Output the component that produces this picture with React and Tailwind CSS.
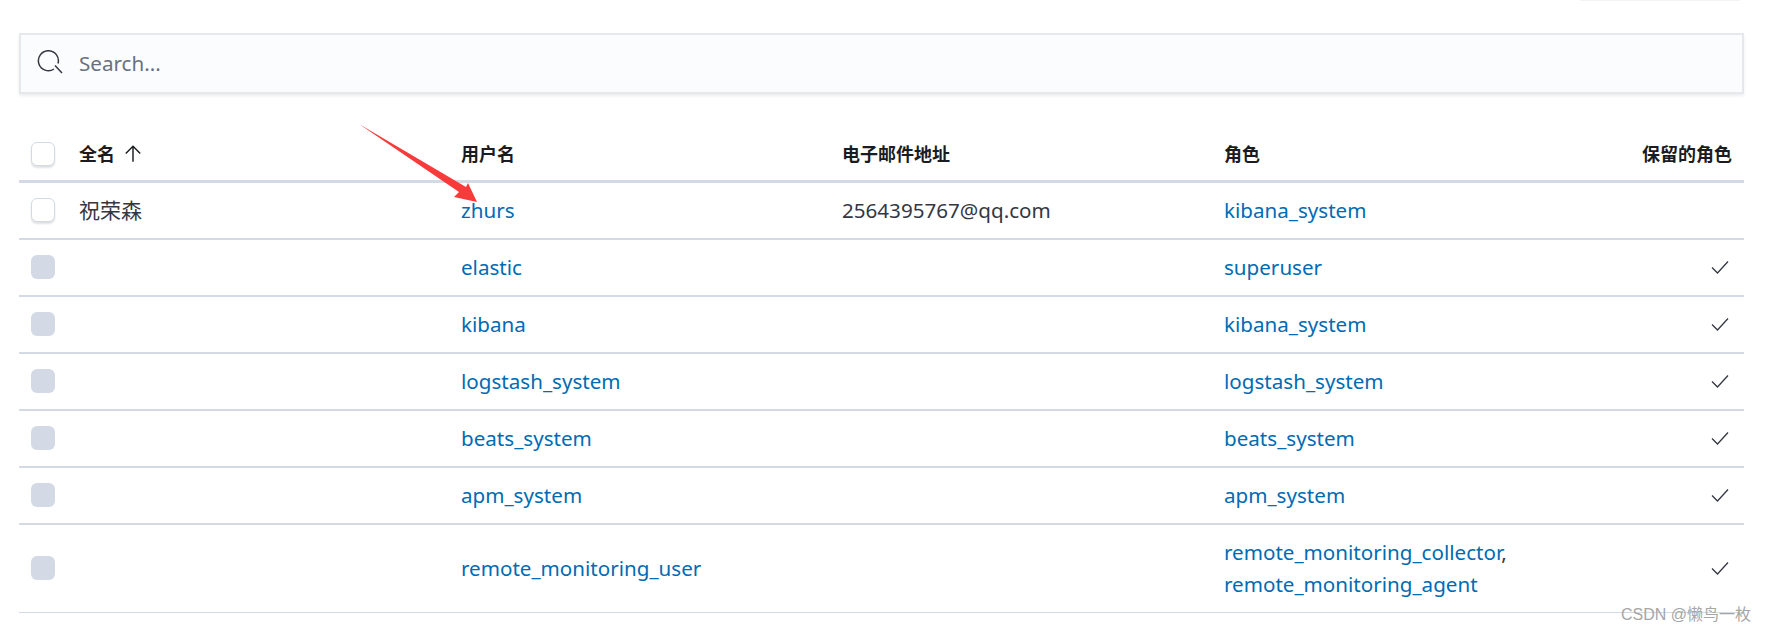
import React from "react";

const rows = [
  { name: "祝荣森", user: "zhurs", email: "2564395767@qq.com", roles: ["kibana_system"], reserved: false },
  { user: "elastic", roles: ["superuser"], reserved: true },
  { user: "kibana", roles: ["kibana_system"], reserved: true },
  { user: "logstash_system", roles: ["logstash_system"], reserved: true },
  { user: "beats_system", roles: ["beats_system"], reserved: true },
  { user: "apm_system", roles: ["apm_system"], reserved: true },
  { user: "remote_monitoring_user", roles: ["remote_monitoring_collector", "remote_monitoring_agent"], reserved: true },
];

const Check = () => (
  <svg width="20" height="20" viewBox="0 0 20 20" fill="none" stroke="#343741" strokeWidth="1.3">
    <path d="M2 10.5 L7.5 16 L18 4.5" />
  </svg>
);

const Box = ({ disabled }) =>
  disabled ? (
    <div className="w-6 h-6 rounded-md bg-[#d3dae6]" />
  ) : (
    <div className="w-6 h-6 rounded-md bg-white border border-[#d3dae6] shadow-[0_2px_2px_rgba(0,0,0,0.12)]" />
  );

export default function App() {
  return (
    <div className="relative w-[1774px] h-[632px] bg-white overflow-hidden pt-[33px] px-[19px] text-[#343741] font-['Noto_Sans','Noto_Sans_CJK_SC',sans-serif]">
      <div className="absolute top-0 right-[34px] w-[160px] h-px bg-[#f3f4f6]" />
      <div className="w-[1725px] h-[61px] flex items-center pl-[16px] bg-[#fbfcfd] border-2 border-[#e6e8ec] shadow-[0_2px_3px_rgba(0,0,0,0.07)]">
        <svg width="28" height="28" viewBox="0 0 28 28" fill="none" stroke="#343741" strokeWidth="1.5" className="shrink-0">
          <path d="M17 19 A10 10 0 1 1 21 13.5" />
          <path d="M18 15.5 L25 23" />
        </svg>
        <span className="ml-[14px] text-[20.6px] text-[#69707d]">Search...</span>
      </div>

      <div className="mt-[29px] w-[1725px]">
        <div className="grid grid-cols-[60px_382px_381px_382px_1fr] h-[60px] pt-[5px] items-center border-b-[3px] border-[#d3dae6] font-bold text-[18px] text-[#1a1c21]">
          <div className="pl-[12px]"><Box /></div>
          <div className="flex items-center gap-[8px]">
            <span>全名</span>
            <svg width="20" height="20" viewBox="0 0 18 18" fill="none" stroke="#1a1c21" strokeWidth="1.3">
              <path d="M9 16 V2 M2.5 8.5 L9 2 L15.5 8.5" />
            </svg>
          </div>
          <div>用户名</div>
          <div>电子邮件地址</div>
          <div className="text-right pr-[12px]">
            <span className="float-left">角色</span>
            保留的角色
          </div>
        </div>

        {rows.map((r, i) => (
          <div
            key={r.user}
            className={`grid grid-cols-[60px_382px_381px_382px_1fr] items-center pb-[2px] leading-[32px] border-[#d3dae6] ${
              i === rows.length - 1 ? "h-[88px] border-b" : "h-[57px] border-b-2"
            } text-[20.6px]`}
          >
            <div className="pl-[12px]"><Box disabled={r.reserved} /></div>
            <div className="text-[21px]">{r.name}</div>
            <div className="text-[#006bb4]">{r.user}</div>
            <div>{r.email}</div>
            <div className="flex items-center">
              <div className="flex-1">
                {r.roles.map((role, j) => (
                  <div key={role}>
                    <span className="text-[#006bb4]">{role}</span>
                    {j < r.roles.length - 1 ? "," : ""}
                  </div>
                ))}
              </div>
              <div className="w-[20px] mr-[14px] flex justify-end">{r.reserved ? <Check /> : null}</div>
            </div>
          </div>
        ))}
      </div>

      <svg className="absolute left-[355px] top-[120px]" width="125" height="85" viewBox="0 0 125 85" fill="none">
        <path d="M4 4 L111 67 L113 63 L122 82 L99 77 L104 72 Z" fill="#f73a3a" />
      </svg>

      <div className="absolute left-[1621px] top-[603px] text-[16px] text-[#a6a6a6] font-['Liberation_Sans','Noto_Sans_CJK_SC',sans-serif] whitespace-nowrap">
        CSDN @懒鸟一枚
      </div>
    </div>
  );
}
